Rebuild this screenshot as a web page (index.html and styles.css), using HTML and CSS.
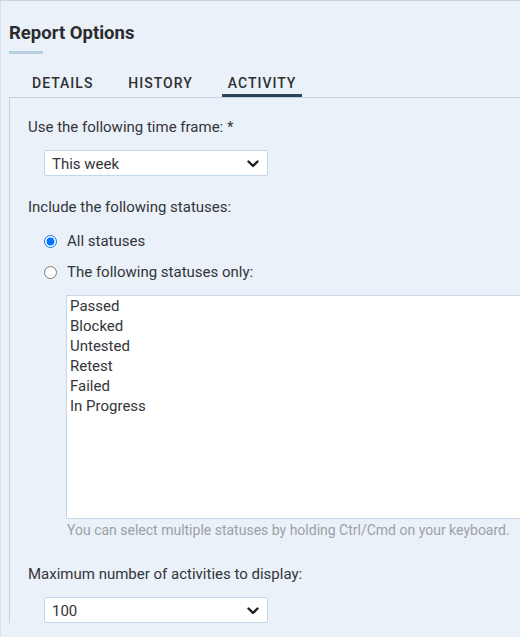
FILE: index.html
```html
<!DOCTYPE html>
<html>
<head>
<meta charset="utf-8">
<link rel="stylesheet" href="styles.css">
</head>
<body>
<div class="page">
  <h1 class="title">Report Options</h1>
  <div class="title-bar"></div>
  <div class="tabs">
    <div class="tab">DETAILS</div>
    <div class="tab">HISTORY</div>
    <div class="tab active">ACTIVITY</div>
  </div>
  <div class="panel">
    <div class="label">Use the following time frame: *</div>
    <div class="select">
      <span>This week</span>
      <svg class="chev" width="12" height="8" viewBox="0 0 12 8"><path d="M1.5 1.5 L6 6 L10.5 1.5" fill="none" stroke="#1f1f1f" stroke-width="2.4" stroke-linecap="round" stroke-linejoin="round"/></svg>
    </div>
    <div class="label label-gap">Include the following statuses:</div>
    <div class="radios">
      <label class="radio-row"><input type="radio" name="st" checked><span>All statuses</span></label>
      <label class="radio-row"><input type="radio" name="st"><span>The following statuses only:</span></label>
    </div>
    <div class="listbox">
      <div class="opt">Passed</div>
      <div class="opt">Blocked</div>
      <div class="opt">Untested</div>
      <div class="opt">Retest</div>
      <div class="opt">Failed</div>
      <div class="opt">In Progress</div>
    </div>
    <div class="help">You can select multiple statuses by holding Ctrl/Cmd on your keyboard.</div>
    <div class="label label-gap2">Maximum number of activities to display:</div>
    <div class="select">
      <span>100</span>
      <svg class="chev" width="12" height="8" viewBox="0 0 12 8"><path d="M1.5 1.5 L6 6 L10.5 1.5" fill="none" stroke="#1f1f1f" stroke-width="2.4" stroke-linecap="round" stroke-linejoin="round"/></svg>
    </div>
  </div>
</div>
</body>
</html>
```
FILE: styles.css
```css
html, body {
  margin: 0;
  padding: 0;
  background: #eaf1f8;
}
body {
  font-family: Roboto, "Liberation Sans", sans-serif;
  color: #333538;
  border-top: 1px solid #c8d3de;
  border-left: 1px solid #d6e0ea;
  height: 637px;
  overflow: hidden;
  box-sizing: border-box;
}
.page {
  padding-left: 8px;
}
.title {
  margin: 0;
  padding-top: 21px;
  font-size: 18.5px;
  line-height: 22px;
  font-weight: 700;
  color: #2a2c2e;
}
.title-bar {
  width: 34px;
  height: 3px;
  background: #b8cfe2;
  margin-top: 7px;
}
.tabs {
  display: flex;
  gap: 23px;
  margin-left: 17px;
  margin-top: 17px;
}
.tab {
  padding: 2px 6px 0;
  font-size: 14px;
  line-height: 20px;
  height: 21px;
  letter-spacing: 1px;
  font-weight: 500;
  color: #2e3033;
  border-bottom: 3px solid transparent;
}
.tab.active {
  border-bottom-color: #2b4658;
}
.panel {
  border-top: 1px solid #c3d2df;
  border-left: 1px solid #c3d2df;
  padding: 19px 0 0 18px;
}
.label {
  font-size: 15px;
  line-height: 20px;
}
.label-gap { margin-top: 21px; }
.label-gap2 { margin-top: 24px; }
.select {
  margin: 13px 0 0 16px;
  width: 224px;
  height: 26px;
  box-sizing: border-box;
  background: #fff;
  border: 1px solid #c6d7e8;
  border-radius: 2px;
  display: flex;
  align-items: center;
  justify-content: space-between;
  padding: 2px 8px 0 7px;
  font-size: 15px;
}
.chev { display: block; margin-top: -1px; }
.radios {
  margin: 14px 0 0 16px;
  display: flex;
  flex-direction: column;
  gap: 11px;
}
.radio-row {
  display: flex;
  align-items: center;
  font-size: 15px;
  line-height: 20px;
}
.radio-row input {
  margin: 0 10px 0 0;
  width: 13px;
  height: 13px;
}
.listbox {
  margin: 13px 0 0 38px;
  height: 224px;
  box-sizing: border-box;
  background: #fff;
  border: 1px solid #c6d7e8;
  border-right: none;
  padding: 0 0 0 3px;
}
.opt {
  font-size: 15px;
  line-height: 20px;
}
.help {
  margin: 1px 0 0 39px;
  font-size: 14px;
  line-height: 20px;
  color: #9ba1a7;
}
```
